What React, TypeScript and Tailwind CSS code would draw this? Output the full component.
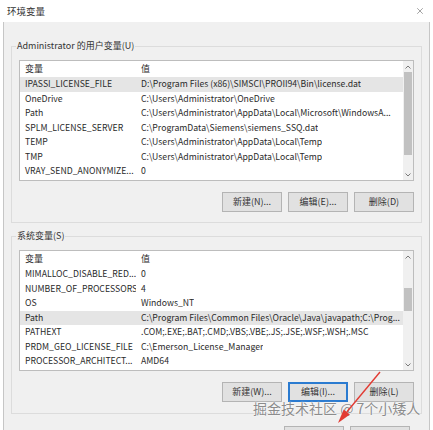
import React from 'react';
import { X } from 'lucide-react';

type Row = { name: string; value: string };

const userVars: Row[] = [
  { name: 'IPASSI_LICENSE_FILE', value: 'D:\\Program Files (x86)\\SIMSCI\\PROII94\\Bin\\license.dat' },
  { name: 'OneDrive', value: 'C:\\Users\\Administrator\\OneDrive' },
  { name: 'Path', value: 'C:\\Users\\Administrator\\AppData\\Local\\Microsoft\\WindowsA...' },
  { name: 'SPLM_LICENSE_SERVER', value: 'C:\\ProgramData\\Siemens\\siemens_SSQ.dat' },
  { name: 'TEMP', value: 'C:\\Users\\Administrator\\AppData\\Local\\Temp' },
  { name: 'TMP', value: 'C:\\Users\\Administrator\\AppData\\Local\\Temp' },
  { name: 'VRAY_SEND_ANONYMIZE...', value: '0' },
];

const sysVars: Row[] = [
  { name: 'MIMALLOC_DISABLE_RED...', value: '0' },
  { name: 'NUMBER_OF_PROCESSORS', value: '4' },
  { name: 'OS', value: 'Windows_NT' },
  { name: 'Path', value: 'C:\\Program Files\\Common Files\\Oracle\\Java\\javapath;C:\\Prog...' },
  { name: 'PATHEXT', value: '.COM;.EXE;.BAT;.CMD;.VBS;.VBE;.JS;.JSE;.WSF;.WSH;.MSC' },
  { name: 'PRDM_GEO_LICENSE_FILE', value: 'C:\\Emerson_License_Manager' },
  { name: 'PROCESSOR_ARCHITECT...', value: 'AMD64' },
];

const Arrow = ({ up }: { up?: boolean }) => (
  <svg width="6" height="4" viewBox="0 0 6 4">
    <polyline
      points={up ? '0.5,3.5 3,1 5.5,3.5' : '0.5,0.5 3,3 5.5,0.5'}
      fill="none"
      stroke="#7a7a7a"
      strokeWidth="1"
    />
  </svg>
);

const VarList = ({
  rows,
  selected,
  thumbClass,
}: {
  rows: Row[];
  selected: number;
  thumbClass: string;
}) => (
  <div className="h-[121px] border border-[#bdbdbd] bg-white flex overflow-hidden">
    <div className="flex-1 flex flex-col min-w-0 text-[8.7px]">
      <div className="h-[16px] flex items-center shrink-0 text-[9px]">
        <div className="w-[116px] pl-[5px]">变量</div>
        <div className="pl-[5px]">值</div>
      </div>
      {rows.map((r, i) => (
        <div
          key={r.name + i}
          className={`h-[14.5px] leading-[14.5px] flex shrink-0 whitespace-nowrap ${
            i === selected ? 'bg-[#e5e5e5]' : ''
          }`}
        >
          <div className="w-[116px] pl-[5px] overflow-hidden shrink-0">{r.name}</div>
          <div className="pl-[5px] overflow-hidden">{r.value}</div>
        </div>
      ))}
    </div>
    <div className="w-[10px] bg-[#f0f0f0] flex flex-col shrink-0">
      <div className="h-[11px] flex items-center justify-center shrink-0">
        <Arrow up />
      </div>
      <div className="flex-1 px-[1px]">
        <div className={`bg-[#c1c1c1] ${thumbClass}`} />
      </div>
      <div className="h-[11px] flex items-center justify-center shrink-0">
        <Arrow />
      </div>
    </div>
  </div>
);

const Btn = ({ label, focused }: { label?: string; focused?: boolean }) => (
  <button
    className={`w-[60px] h-[20px] text-[9px] text-[#333] bg-[#e1e1e1] ${
      focused ? 'border-2 border-[#2b7bd0]' : 'border border-[#b4b4b4]'
    }`}
  >
    {label}
  </button>
);

const App = () => {
  return (
    <div className="relative w-[433px] h-[430px] overflow-hidden bg-white text-[9px] text-[#2a2a2a] font-['Noto_Sans_CJK_SC',sans-serif]">
      {/* Title bar */}
      <div className="h-[22px] flex items-center justify-between pl-[7px] pr-[8px] bg-white">
        <span className="text-[9.5px] text-[#333]">环境变量</span>
        <X className="w-[10px] h-[10px] text-[#555]" strokeWidth={1.3} />
      </div>

      {/* Body */}
      <div className="mx-[3px] h-[408px] bg-[#f0f0f0] border-x border-[#c6c6c6] px-[7px] pt-[17px]">
        <fieldset className="border border-[#dcdcdc] px-[7px] pt-[7px] pb-[10px]">
          <legend className="-ml-[3px] px-[1px] leading-[14px] text-[#333]">Administrator 的用户变量(U)</legend>
          <VarList rows={userVars} selected={0} thumbClass="mt-[0px] h-[83px]" />
          <div className="mt-[11px] flex justify-end gap-[6px]">
            <Btn label="新建(N)..." />
            <Btn label="编辑(E)..." />
            <Btn label="删除(D)" />
          </div>
        </fieldset>

        <fieldset className="mt-[6px] border border-[#dcdcdc] px-[7px] pt-[7px] pb-[11px]">
          <legend className="-ml-[3px] px-[1px] leading-[14px] text-[#333]">系统变量(S)</legend>
          <VarList rows={sysVars} selected={3} thumbClass="mt-[26px] h-[23px]" />
          <div className="mt-[11px] flex justify-end gap-[6px]">
            <Btn label="新建(W)..." />
            <Btn label="编辑(I)..." focused />
            <Btn label="删除(L)" />
          </div>
        </fieldset>

        {/* OK / Cancel, only their top edges show */}
        <div className="mt-[12px] flex justify-end gap-[6px] pr-[12px]">
          <Btn />
          <Btn />
        </div>
      </div>

      {/* Watermark */}
      <div className="absolute left-[253px] top-[397px] text-[14px] leading-[22px] text-[#8c8c8c] whitespace-nowrap [text-shadow:0_0_2px_#fff,0_0_1px_#fff]">
        掘金技术社区 @ 7个小矮人
      </div>

      {/* Red arrow */}
      <svg className="absolute left-[330px] top-[365px]" width="60" height="65" viewBox="0 0 60 65">
        <line x1="50" y1="7" x2="16.8" y2="47" stroke="#e23b33" strokeWidth="1.4" />
        <polygon points="8,58 19.9,49.6 13.7,44.6" fill="#e23b33" />
      </svg>
    </div>
  );
};

export default App;
